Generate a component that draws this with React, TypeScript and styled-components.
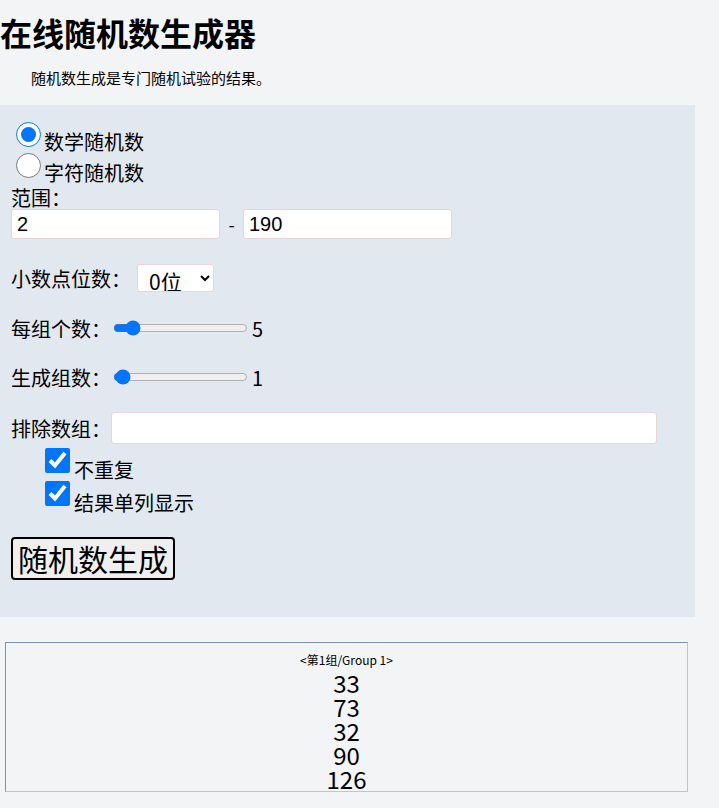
import React, { useState } from "react";
import styled, { createGlobalStyle } from "styled-components";

const GlobalStyle = createGlobalStyle`
  body {
    margin: 0;
    background: #f3f4f6;
    color: #000;
    font-family: "Noto Sans CJK SC", "Noto Sans", sans-serif;
  }
`;

const Page = styled.div`
  width: 719px;
`;

const Title = styled.h1`
  margin: 0;
  padding-top: 12px;
  font-size: 32px;
  line-height: 40px;
  font-weight: 700;
`;

const Intro = styled.p`
  margin: 0;
  padding: 16px 0 0 31px;
  height: 37px;
  font-size: 15px;
  line-height: 20px;
`;

const Panel = styled.div`
  width: 695px;
  box-sizing: border-box;
  background: #e2e8f0;
  padding: 17px 11px 37px;
  font-size: 20px;
`;

const ChoiceRow = styled.label<{ $indent?: number; $height: number }>`
  display: flex;
  align-items: flex-end;
  height: ${(p) => p.$height}px;
  padding-left: ${(p) => p.$indent ?? 0}px;
  line-height: 22px;
`;

const Radio = styled.input`
  width: 25px;
  height: 25px;
  margin: 0 3px 0 5px;
  align-self: flex-start;
  accent-color: #0075ff;
`;

const Check = styled.input`
  width: 25px;
  height: 25px;
  margin: 0 4px 0 0;
  align-self: flex-start;
  accent-color: #0075ff;
`;

const FieldLabel = styled.div`
  margin-top: 3px;
  line-height: 22px;
`;

const Row = styled.div<{ $top: number; $height: number }>`
  display: flex;
  align-items: center;
  margin-top: ${(p) => p.$top}px;
  height: ${(p) => p.$height}px;
`;

const TextBox = styled.input<{ $width: number; $height: number }>`
  box-sizing: border-box;
  width: ${(p) => p.$width}px;
  height: ${(p) => p.$height}px;
  border: 1px solid #ecd4d6;
  border-radius: 3px;
  background: #fff;
  padding: 0 5px;
  font-family: "Liberation Sans", Arial, sans-serif;
  font-size: 20px;
  color: #000;
  outline: none;
`;

const Dash = styled.span`
  width: 23px;
  text-align: center;
  font-size: 18px;
`;

const Select = styled.select`
  box-sizing: border-box;
  margin-left: 6px;
  width: 77px;
  height: 28px;
  border: 1px solid #ecd4d6;
  border-radius: 3px;
  background: #fff;
  padding: 0 4px 0 7px;
  font-family: "Noto Sans CJK SC", sans-serif;
  font-size: 21px;
  color: #000;
`;

const Slider = styled.input`
  width: 135px;
  margin: 0 4px 0 2px;
  accent-color: #0075ff;
`;

const Button = styled.button`
  margin-top: 23px;
  padding: 0 5px;
  height: 43px;
  border: 2px solid #000;
  border-radius: 4px;
  background: #efefef;
  font-family: "Noto Sans CJK SC", sans-serif;
  font-size: 30px;
  line-height: 37px;
  color: #000;
`;

const Result = styled.div`
  box-sizing: border-box;
  margin: 25px 0 0 5px;
  width: 683px;
  height: 150px;
  border-style: solid;
  border-width: 1px;
  border-color: #7d93ad #a9cbe6 #a9cbe6 #7d93ad;
  padding-top: 9px;
  text-align: center;
`;

const GroupHead = styled.div`
  font-size: 12px;
  line-height: 16px;
  margin-bottom: 3px;
`;

const Num = styled.div`
  font-size: 24px;
  line-height: 24px;
`;

const results = [33, 73, 32, 90, 126];

export default function App() {
  const [mode, setMode] = useState("math");
  const [count, setCount] = useState(5);
  const [groups, setGroups] = useState(1);

  return (
    <Page>
      <GlobalStyle />
      <Title>在线随机数生成器</Title>
      <Intro>随机数生成是专门随机试验的结果。</Intro>
      <Panel>
        <ChoiceRow $height={31}>
          <Radio
            type="radio"
            name="mode"
            checked={mode === "math"}
            onChange={() => setMode("math")}
          />
          数学随机数
        </ChoiceRow>
        <ChoiceRow $height={31}>
          <Radio
            type="radio"
            name="mode"
            checked={mode === "char"}
            onChange={() => setMode("char")}
          />
          字符随机数
        </ChoiceRow>
        <FieldLabel>范围：</FieldLabel>
        <Row $top={0} $height={30}>
          <TextBox $width={209} $height={30} defaultValue="2" />
          <Dash>-</Dash>
          <TextBox $width={209} $height={30} defaultValue="190" />
        </Row>
        <Row $top={25} $height={28}>
          小数点位数：
          <Select defaultValue="0">
            <option value="0">0位</option>
            <option value="1">1位</option>
            <option value="2">2位</option>
          </Select>
        </Row>
        <Row $top={22} $height={28}>
          每组个数：
          <Slider
            type="range"
            min={0}
            max={50}
            value={count}
            onChange={(e) => setCount(Number(e.target.value))}
          />
          {count}
        </Row>
        <Row $top={21} $height={28}>
          生成组数：
          <Slider
            type="range"
            min={0}
            max={50}
            value={groups}
            onChange={(e) => setGroups(Number(e.target.value))}
          />
          {groups}
        </Row>
        <Row $top={21} $height={32}>
          排除数组：
          <TextBox $width={546} $height={32} />
        </Row>
        <ChoiceRow $indent={34} $height={33} style={{ marginTop: 4 }}>
          <Check type="checkbox" defaultChecked />
          不重复
        </ChoiceRow>
        <ChoiceRow $indent={34} $height={33}>
          <Check type="checkbox" defaultChecked />
          结果单列显示
        </ChoiceRow>
        <Button>随机数生成</Button>
      </Panel>
      <Result>
        <GroupHead>&lt;第1组/Group 1&gt;</GroupHead>
        {results.map((n, i) => (
          <Num key={i}>{n}</Num>
        ))}
      </Result>
    </Page>
  );
}
